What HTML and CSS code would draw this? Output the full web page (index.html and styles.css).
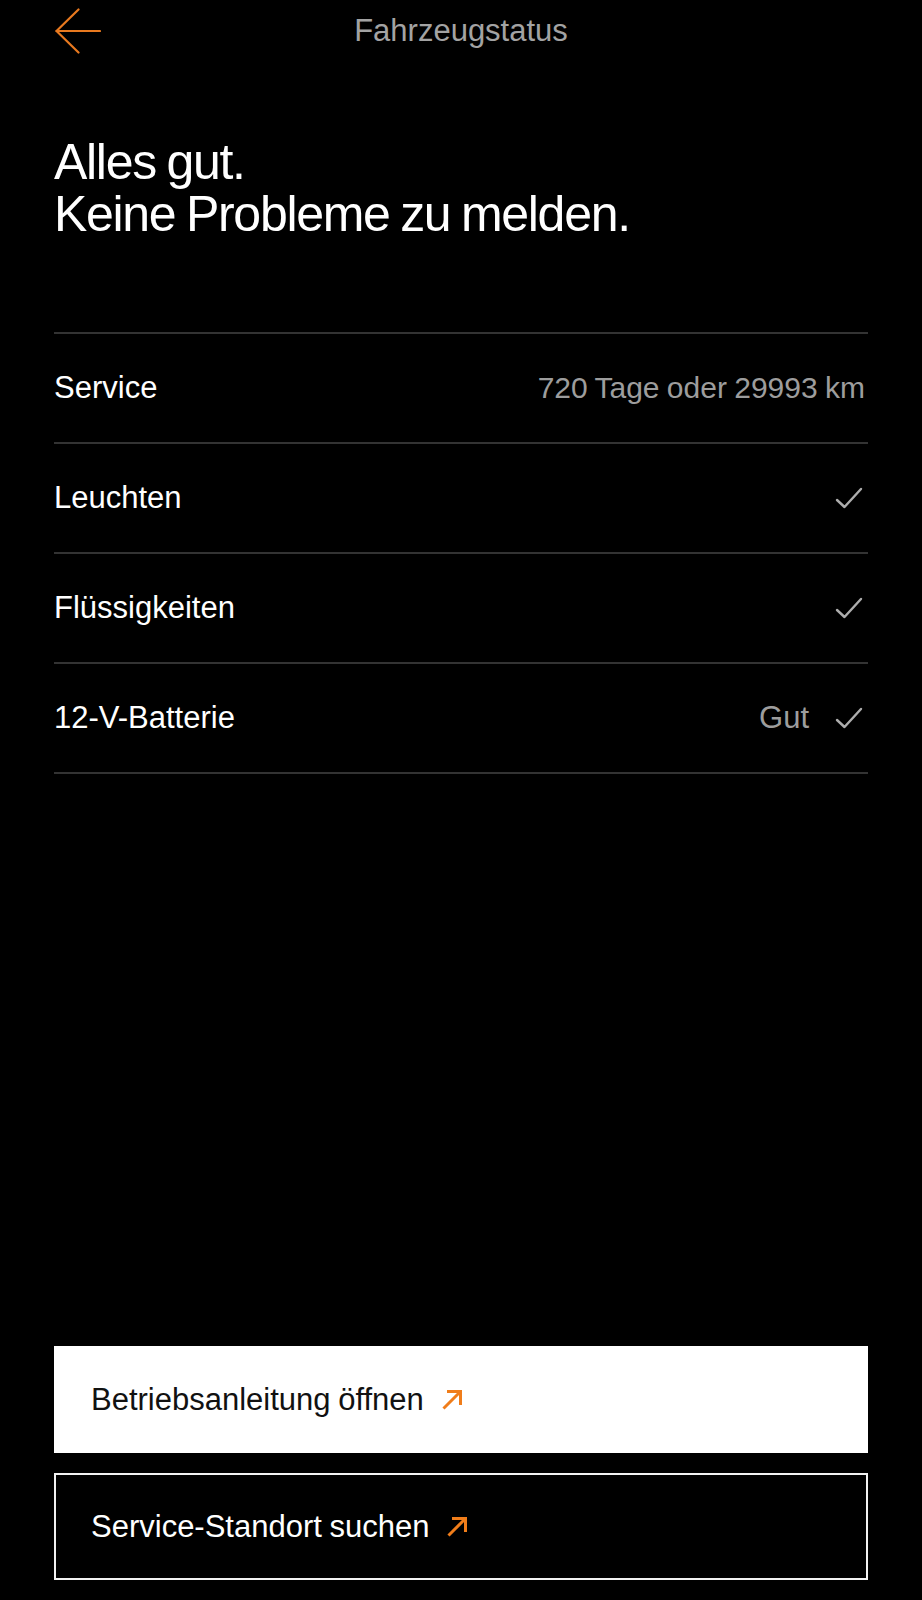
FILE: index.html
```html
<!DOCTYPE html>
<html lang="de">
<head>
<meta charset="utf-8">
<title>Fahrzeugstatus</title>
<link rel="stylesheet" href="styles.css">
</head>
<body>
<div class="page">
  <header class="topbar">
    <div class="back">
      <svg class="back-icon" width="46" height="46" viewBox="0 0 46 46" fill="none" stroke="#e8791f" stroke-width="2.2" stroke-linecap="round" stroke-linejoin="round">
        <path d="M1.5 23 H45"/>
        <path d="M23.5 1.5 L1.5 23 L23.5 44.5"/>
      </svg>
    </div>
    <h1 class="title">Fahrzeugstatus</h1>
    <div></div>
  </header>

  <h2 class="headline">Alles gut.<br>Keine Probleme zu melden.</h2>

  <ul class="status-list">
    <li class="row">
      <span class="label">Service</span>
      <span class="value">720 Tage oder 29993 km</span>
    </li>
    <li class="row">
      <span class="label">Leuchten</span>
      <span class="right">
        <svg class="check" width="28" height="22" viewBox="0 0 28 22" fill="none" stroke="#adadad" stroke-width="2.4" stroke-linecap="round" stroke-linejoin="round"><path d="M2 13 L9.5 20 L26 2"/></svg>
      </span>
    </li>
    <li class="row">
      <span class="label">Flüssigkeiten</span>
      <span class="right">
        <svg class="check" width="28" height="22" viewBox="0 0 28 22" fill="none" stroke="#adadad" stroke-width="2.4" stroke-linecap="round" stroke-linejoin="round"><path d="M2 13 L9.5 20 L26 2"/></svg>
      </span>
    </li>
    <li class="row">
      <span class="label">12-V-Batterie</span>
      <span class="right">
        <span class="value">Gut</span>
        <svg class="check" width="28" height="22" viewBox="0 0 28 22" fill="none" stroke="#adadad" stroke-width="2.4" stroke-linecap="round" stroke-linejoin="round"><path d="M2 13 L9.5 20 L26 2"/></svg>
      </span>
    </li>
  </ul>

  <div class="actions">
    <a class="btn btn-light" href="#">
      <span>Betriebsanleitung öffnen</span>
      <svg class="ext" width="23" height="23" viewBox="0 0 23 23" fill="none" stroke="#f07d1a" stroke-width="3" stroke-linecap="butt"><path d="M2.5 20.5 L19 4"/><path d="M6 3.5 H19.5 V17"/></svg>
    </a>
    <a class="btn btn-dark" href="#">
      <span>Service-Standort suchen</span>
      <svg class="ext" width="23" height="23" viewBox="0 0 23 23" fill="none" stroke="#f07d1a" stroke-width="3" stroke-linecap="butt"><path d="M2.5 20.5 L19 4"/><path d="M6 3.5 H19.5 V17"/></svg>
    </a>
  </div>
</div>
</body>
</html>
```

FILE: styles.css
```css
* {
  box-sizing: border-box;
}

html, body {
  margin: 0;
  padding: 0;
  background: #000;
}

body {
  font-family: "Liberation Sans", Arial, sans-serif;
  color: #fff;
}

.page {
  min-height: 1600px;
  display: flex;
  flex-direction: column;
  padding: 0 54px 20px 54px;
}

.topbar {
  display: grid;
  grid-template-columns: 1fr auto 1fr;
  align-items: center;
  height: 62px;
  margin: 0 -54px;
  padding: 0 55px;
}

.back {
  display: flex;
  align-items: center;
}

.back-icon {
  display: block;
}

.title {
  margin: 0;
  font-size: 31px;
  font-weight: 400;
  line-height: 36px;
  color: #a3a3a3;
}

.headline {
  margin: 74px 0 0 0;
  font-size: 50px;
  font-weight: 400;
  line-height: 52px;
  letter-spacing: -1.3px;
  word-spacing: -2px;
  color: #fff;
}

.status-list {
  list-style: none;
  margin: 92px 0 0 0;
  padding: 0;
  border-top: 2px solid #333;
}

.row {
  display: flex;
  align-items: center;
  justify-content: space-between;
  height: 110px;
  border-bottom: 2px solid #333;
  padding: 0 3px 0 0;
}

.label {
  font-size: 31px;
  line-height: 36px;
  color: #fff;
}

.value {
  font-size: 30px;
  line-height: 36px;
  letter-spacing: 0;
  word-spacing: -1px;
  color: #9d9d9d;
}

.right {
  display: flex;
  align-items: center;
  gap: 26px;
}

.right .value {
  font-size: 31px;
}

.check {
  display: block;
  margin-right: 2px;
}

.actions {
  margin-top: auto;
  display: flex;
  flex-direction: column;
  gap: 20px;
}

.btn {
  display: flex;
  align-items: center;
  gap: 17px;
  height: 107px;
  padding: 0 0 0 37px;
  font-size: 31px;
  line-height: 36px;
  word-spacing: -1px;
  text-decoration: none;
}

.btn-light {
  background: #fff;
  color: #111;
}

.btn-dark {
  background: #000;
  color: #fff;
  border: 2px solid #f2f2f2;
  padding-left: 35px;
}

.ext {
  display: block;
  margin-top: 0;
}
```
